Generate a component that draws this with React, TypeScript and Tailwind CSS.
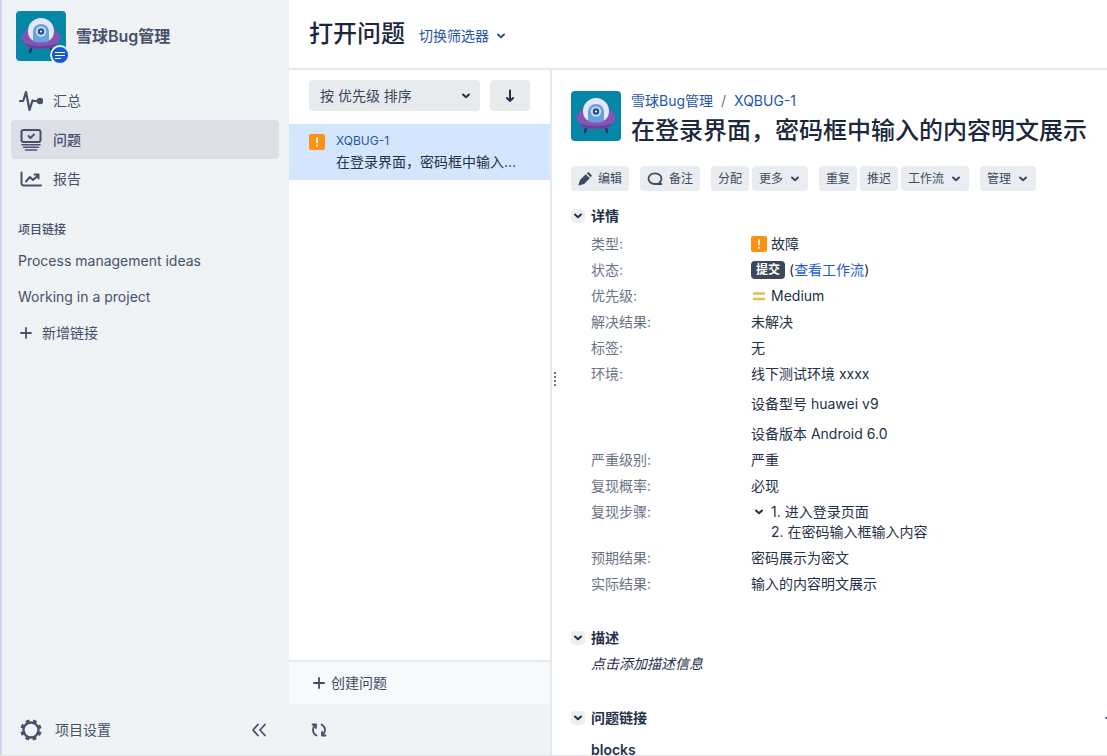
import type { ReactNode } from "react";

const ISSUE_TITLE = "在登录界面，密码框中输入的内容明文展示";

const FONT =
  "font-['Inter','Noto_Sans_CJK_SC',sans-serif] text-sm text-[#253147]";

const UfoAvatar = () => (
  <svg viewBox="0 0 50 50" className="size-[50px] shrink-0 rounded" aria-hidden="true">
    <rect width="50" height="50" fill="#0687a8" />
    <path d="M15.500 36l-1.500 5M34.500 36l1.500 5" stroke="#2b3566" strokeWidth="2.600" strokeLinecap="round" />
    <path d="M5 25.500l7-8.500h26l7 8.500c-1.500 6-6 11.500-12 12H17C11 37 6.500 31.500 5 25.500z" fill="#8455b5" />
    <path d="M8.500 32c2 3 5 5.200 8.500 5.500h16c3.500-.3 6.500-2.500 8.500-5.500-4 2-9.500 3-16.500 3s-12.500-1-16.500-3z" fill="#67409b" />
    <path d="M12 20a13 13 0 0 1 26 0c0 8-5 11-13 11s-13-3-13-11z" fill="#e5e6fa" />
    <path d="M17 30v-9a8 8 0 0 1 16 0v9c-4 2-12 2-16 0z" fill="#68a0dc" />
    <circle cx="25" cy="20.500" r="5.200" fill="#c3dffa" />
    <circle cx="25" cy="20.500" r="3.200" fill="#2b527c" />
    <circle cx="25" cy="20.500" r="1.100" fill="#e6f4ff" />
  </svg>
);

const Chevron = () => (
  <svg viewBox="0 0 12 12" className="size-3 shrink-0" fill="none" stroke="currentColor" strokeWidth="2" strokeLinecap="round" strokeLinejoin="round" aria-hidden="true">
    <path d="M3 4.500l3 2.800 3-2.800" />
  </svg>
);

const PlusIcon = () => (
  <svg viewBox="0 0 12 12" className="size-3 shrink-0" fill="none" stroke="currentColor" strokeWidth="1.800" strokeLinecap="round" aria-hidden="true">
    <path d="M6 1v10M1 6h10" />
  </svg>
);

const BugTypeIcon = () => (
  <svg viewBox="0 0 16 16" className="size-4 shrink-0" aria-hidden="true">
    <rect width="16" height="16" rx="2" fill="#fb9213" />
    <path d="M8 4v4.500M8 11.500v.3" stroke="#fff3d6" strokeWidth="2" strokeLinecap="round" />
  </svg>
);

const PulseIcon = () => (
  <svg viewBox="0 0 24 24" className="size-6" fill="none" stroke="currentColor" strokeWidth="2.200" strokeLinecap="round" strokeLinejoin="round" aria-hidden="true">
    <path d="M1 12h3.200L7 3l3.500 18 3-9.500 1.500.5h6" />
    <circle cx="21" cy="12" r="2.200" fill="currentColor" />
  </svg>
);

const IssuesIcon = () => (
  <svg viewBox="0 0 24 24" className="size-6" fill="none" stroke="currentColor" strokeWidth="2" strokeLinecap="round" strokeLinejoin="round" aria-hidden="true">
    <rect x="2.500" y="2" width="19" height="12" rx="2" />
    <path d="M9.500 8l2 2 3.500-3.500" />
    <path d="M3 16.700h18M4.500 19.300h15M6.500 22h11" strokeWidth="1.600" />
  </svg>
);

const ReportsIcon = () => (
  <svg viewBox="0 0 24 24" className="size-6" fill="none" stroke="currentColor" strokeWidth="2" strokeLinecap="round" strokeLinejoin="round" aria-hidden="true">
    <path d="M2.500 5.500V16a2.500 2.500 0 0 0 2.500 2.500h17" />
    <path d="M7 14.500l4-4.500 3 3 5-4.500M15.500 7.500h4v4" />
  </svg>
);

const GearIcon = () => (
  <svg viewBox="0 0 24 24" className="size-6" fill="none" stroke="currentColor" aria-hidden="true">
    <circle cx="12" cy="12" r="7.500" strokeWidth="2.400" />
    <circle cx="12" cy="12" r="9.400" strokeWidth="2.600" strokeDasharray="3.690 3.690" strokeDashoffset="-1.850" />
  </svg>
);

const CollapseIcon = () => (
  <svg viewBox="0 0 16 16" className="size-4" fill="none" stroke="currentColor" strokeWidth="1.800" strokeLinecap="round" strokeLinejoin="round" aria-hidden="true">
    <path d="M7 2.500L2 8l5 5.500M14 2.500L9 8l5 5.500" />
  </svg>
);

const RefreshIcon = () => (
  <svg viewBox="0 0 16 16" className="size-4" fill="none" stroke="currentColor" strokeWidth="1.800" strokeLinecap="round" strokeLinejoin="round" aria-hidden="true">
    <path d="M5.500 13.500C1 11 1 6 4.500 3M1.500 2.500h3.500V6M10.500 2.500C15 5 15 10 11.500 13M14.500 13.500H11V10" />
  </svg>
);

const PencilIcon = () => (
  <svg viewBox="0 0 14 14" className="size-3.5 shrink-0" fill="currentColor" aria-hidden="true">
    <path d="M7.800 2.200l4 4-5.800 5.800-5 1.500c-.4.100-.6-.1-.5-.5L2 8zM8.800 1.300l.6-.6c.6-.6 1.300-.6 1.900 0l2 2c.6.6.6 1.300 0 1.900l-.6.600z" />
  </svg>
);

const CommentIcon = () => (
  <svg viewBox="0 0 16 14" className="h-3.5 w-4 shrink-0" fill="none" stroke="currentColor" strokeWidth="1.800" strokeLinejoin="round" strokeLinecap="round" aria-hidden="true">
    <path d="M14.500 12h-6.500c-3.800 0-6.500-2.300-6.500-5.300S4.200 1.300 8 1.300s6.500 2.400 6.500 5.400c0 1.700-.8 3.100-2.200 4.100z" />
  </svg>
);

interface NavItem {
  label: string;
  icon: ReactNode;
  active?: boolean;
}

const navItems: NavItem[] = [
  { label: "汇总", icon: <PulseIcon /> },
  { label: "问题", icon: <IssuesIcon />, active: true },
  { label: "报告", icon: <ReportsIcon /> },
];

const Sidebar = () => (
  <aside className="flex w-[289px] shrink-0 flex-col border-l-2 border-[#cbd8ed] bg-[#eff3f6] pr-2.5 text-[#46516a]">
    <div className="flex items-center gap-2.5 pt-[11px] pl-3.5">
      <div className="relative">
        <UfoAvatar />
        <span className="absolute -right-1 -bottom-1 flex size-5 flex-col justify-center gap-0.5 rounded-full border-2 border-[#e4eeff] bg-[#1658d4] pl-[3px]">
          <span className="h-px w-2.5 bg-white" />
          <span className="h-px w-2.5 bg-white" />
          <span className="h-px w-1.5 bg-white" />
        </span>
      </div>
      <span className="text-base font-semibold">雪球Bug管理</span>
    </div>

    <nav className="mt-5 pl-[9px]">
      {navItems.map((item) => (
        <a
          key={item.label}
          href="#"
          className={
            item.active
              ? "flex h-[39px] items-center gap-2.5 rounded bg-[#dcdfe6] pl-2 font-medium"
              : "flex h-[39px] items-center gap-2.5 rounded pl-2"
          }
        >
          {item.icon}
          {item.label}
        </a>
      ))}
    </nav>

    <div className="mt-[26px] flex flex-col pl-4">
      <h2 className="h-[13px] text-xs leading-3 font-medium">项目链接</h2>
      <a href="#" className="mt-[6px] leading-9">Process management ideas</a>
      <a href="#" className="leading-9">Working in a project</a>
      <button type="button" className="flex h-9 items-center gap-2.5 pl-0.5">
        <PlusIcon />
        新增链接
      </button>
    </div>

    <div className="mt-auto flex h-[51px] items-center justify-between pr-3 pl-[17px]">
      <a href="#" className="flex items-center gap-3">
        <GearIcon />
        项目设置
      </a>
      <button type="button" aria-label="收起侧边栏">
        <CollapseIcon />
      </button>
    </div>
  </aside>
);

const IssueList = () => (
  <section className="flex w-[263px] shrink-0 flex-col border-r-2 border-[#e6e9ee]">
    <div className="flex gap-2.5 px-5 pt-2.5 pb-[13px]">
      <div className="grid w-[171px] items-center">
        <select
          aria-label="排序"
          className="col-start-1 row-start-1 h-[31px] appearance-none rounded bg-[#e8ebee] pr-8 pl-[11px] text-[#3c465b]"
        >
          <option>按 优先级 排序</option>
        </select>
        <span className="pointer-events-none col-start-1 row-start-1 mr-2 justify-self-end">
          <Chevron />
        </span>
      </div>
      <button type="button" aria-label="切换排序方向" className="flex h-[31px] w-10 items-center justify-center rounded bg-[#e8ebee]">
        <svg viewBox="0 0 14 14" className="size-3.5" fill="none" stroke="currentColor" strokeWidth="2" strokeLinecap="round" strokeLinejoin="round" aria-hidden="true">
          <path d="M7 1.500v10.500M4 9l3 3 3-3" />
        </svg>
      </button>
    </div>

    <a href="#" className="flex h-14 gap-[11px] border-b border-[#dfe3ea] bg-[#d4e6fe] pt-2 pr-6 pl-5">
      <span className="pt-0.5">
        <BugTypeIcon />
      </span>
      <span className="flex min-w-0 flex-col">
        <span className="text-xs leading-[18px] text-[#2754ac]">XQBUG-1</span>
        <span className="truncate leading-6">{ISSUE_TITLE}</span>
      </span>
    </a>

    <button type="button" className="mt-auto flex h-11 items-center gap-1.5 border-t-2 border-[#e6eaee] bg-[#f6fafd] pl-6 text-[#3f4a62]">
      <PlusIcon />
      创建问题
    </button>
    <div className="flex h-[51px] items-center bg-[#eff3f6] pl-[22px] text-[#46516a]">
      <button type="button" aria-label="刷新">
        <RefreshIcon />
      </button>
    </div>
  </section>
);

interface Action {
  label: string;
  icon?: ReactNode;
  menu?: boolean;
}

const actionGroups: Action[][] = [
  [{ label: "编辑", icon: <PencilIcon /> }],
  [{ label: "备注", icon: <CommentIcon /> }],
  [{ label: "分配" }, { label: "更多", menu: true }],
  [{ label: "重复" }, { label: "推迟" }, { label: "工作流", menu: true }],
  [{ label: "管理", menu: true }],
];

const Toolbar = () => (
  <div className="mt-[15px] flex gap-[11px] text-xs text-[#3f4a60]">
    {actionGroups.map((group) => (
      <div key={group[0].label} className="flex gap-[3px]">
        {group.map((action) => (
          <button
            key={action.label}
            type="button"
            className="flex h-[25px] items-center gap-1.5 rounded-sm bg-[#e9ecf0] px-[7px] whitespace-nowrap"
          >
            {action.icon}
            {action.label}
            {action.menu && <Chevron />}
          </button>
        ))}
      </div>
    ))}
  </div>
);

const SectionTitle = ({ title }: { title: string }) => (
  <h2 className="flex h-[26px] items-center gap-1.5 font-semibold">
    <button type="button" aria-label={`收起${title}`} className="flex size-3.5 items-center justify-center rounded-sm bg-[#eceef1]">
      <Chevron />
    </button>
    {title}
  </h2>
);

const Field = ({ label, children }: { label: string; children: ReactNode }) => (
  <div className="flex leading-[26px]">
    <dt className="w-40 shrink-0 text-[#6b7485]">{label}:</dt>
    <dd>{children}</dd>
  </div>
);

const IssueDetail = () => (
  <article className="min-w-0 flex-1 overflow-hidden pt-[21px] pl-[19px]">
    <header className="flex gap-2.5">
      <UfoAvatar />
      <div className="whitespace-nowrap">
        <div className="flex gap-2 leading-5 text-[#2754ac]">
          <a href="#">雪球Bug管理</a>
          <span className="text-[#6b7485]">/</span>
          <a href="#">XQBUG-1</a>
        </div>
        <h1 className="text-2xl leading-10 font-medium text-[#1b273d]">{ISSUE_TITLE}</h1>
      </div>
    </header>

    <Toolbar />

    <section className="mt-3">
      <SectionTitle title="详情" />
      <dl className="mt-0.5 pl-5">
        <Field label="类型">
          <span className="flex items-center gap-1">
            <BugTypeIcon />
            故障
          </span>
        </Field>
        <Field label="状态">
          <span className="flex items-center gap-1">
            <span className="rounded-sm bg-[#3d485d] px-[5px] text-xs leading-[18px] font-semibold text-white">提交</span>
            <span>
              (<a href="#" className="text-[#1f5bd0]">查看工作流</a>)
            </span>
          </span>
        </Field>
        <Field label="优先级">
          <span className="flex items-center gap-1">
            <svg viewBox="0 0 16 16" className="size-4" stroke="#e3bf4b" strokeWidth="2.500" strokeLinecap="round" aria-hidden="true">
              <path d="M3 5.500h10M3 11h10" />
            </svg>
            Medium
          </span>
        </Field>
        <Field label="解决结果">未解决</Field>
        <Field label="标签">无</Field>
        <Field label="环境">
          <p>线下测试环境 xxxx</p>
          <p className="mt-1">设备型号 huawei v9</p>
          <p className="mt-1">设备版本 Android 6.0</p>
        </Field>
        <Field label="严重级别">严重</Field>
        <Field label="复现概率">必现</Field>
        <Field label="复现步骤">
          <div className="flex gap-1.5 py-[3px] pl-0.5 leading-5">
            <button type="button" aria-label="收起步骤" className="flex h-5 items-center">
              <Chevron />
            </button>
            <div>
              <p>1. 进入登录页面</p>
              <p>2. 在密码输入框输入内容</p>
            </div>
          </div>
        </Field>
        <Field label="预期结果">密码展示为密文</Field>
        <Field label="实际结果">输入的内容明文展示</Field>
      </dl>
    </section>

    <section className="mt-7">
      <SectionTitle title="描述" />
      <p className="pl-5 leading-[26px] italic">点击添加描述信息</p>
    </section>

    <section className="mt-7">
      <div className="flex items-center justify-between">
        <SectionTitle title="问题链接" />
        <button type="button" aria-label="添加链接" className="-mr-2.5 text-[#46516a]">
          <PlusIcon />
        </button>
      </div>
      <h3 className="mt-1.5 pl-5 leading-[26px] font-semibold">blocks</h3>
    </section>
  </article>
);

export default function App() {
  return (
    <div lang="zh-CN" className={`${FONT} flex h-screen overflow-hidden border-b border-[#e3e6e9] bg-white`}>
      <Sidebar />
      <main className="flex min-w-0 flex-1 flex-col">
        <header className="flex h-[70px] shrink-0 items-center gap-3.5 border-b-2 border-[#e6e9ed] pl-5">
          <h1 className="text-2xl font-medium text-[#1b273d]">打开问题</h1>
          <button type="button" className="flex items-center gap-1.5 pt-1 text-[#2754ac]">
            切换筛选器
            <Chevron />
          </button>
        </header>
        <div className="flex min-h-0 flex-1">
          <IssueList />
          <div className="flex w-0 items-center pb-[68px]" aria-hidden="true">
            <svg viewBox="0 0 6 16" className="h-4 w-1.5 shrink-0" fill="#6b7485">
              <path d="M2 1h2v2H2zM2 5h2v2H2zM2 9h2v2H2zM2 13h2v2H2z" />
            </svg>
          </div>
          <IssueDetail />
        </div>
      </main>
    </div>
  );
}
